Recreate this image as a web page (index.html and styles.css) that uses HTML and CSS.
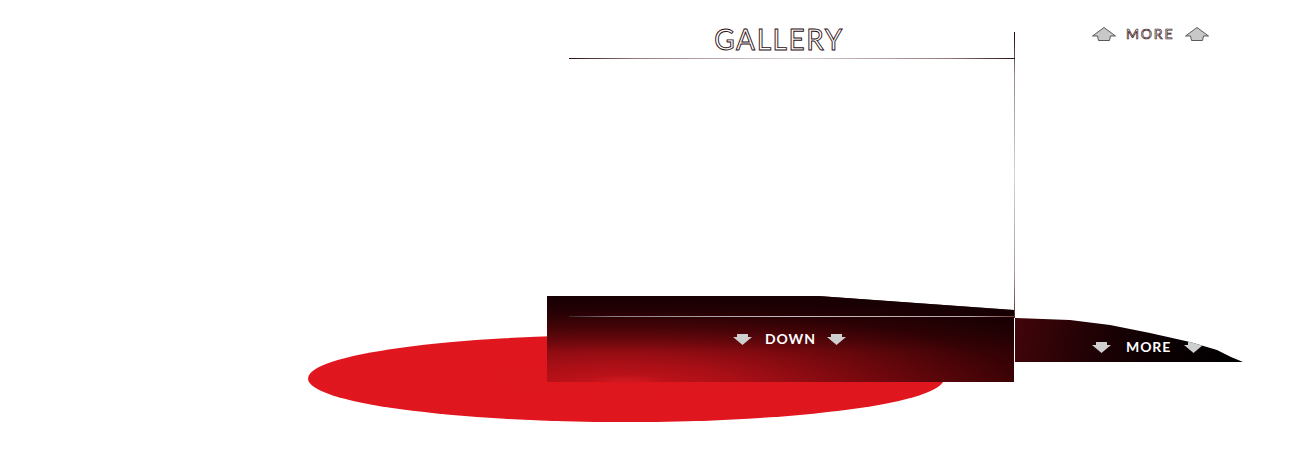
FILE: index.html
```html
<!DOCTYPE html>
<html>
<head>
<meta charset="utf-8">
<link rel="stylesheet" href="styles.css">
</head>
<body>
<div class="stage">
  <div class="glow"></div>
  <section class="panel">
    <header class="head"><h1 class="title">GALLERY</h1></header>
    <div class="body"></div>
    <div class="box">
      <div class="box-line"></div>
      <div class="nav-row down-row">
        <svg class="arrow-down" width="19" height="11" viewBox="0 0 19 11"><path d="M4 0H15V3H19L9.5 11L0 3H4Z"/></svg>
        <span class="nav-label">DOWN</span>
        <svg class="arrow-down" width="19" height="11" viewBox="0 0 19 11"><path d="M4 0H15V3H19L9.5 11L0 3H4Z"/></svg>
      </div>
    </div>
  </section>
  <aside class="side">
    <div class="more-up">
      <svg class="arrow-up" width="24" height="14" viewBox="0 0 24 14"><path d="M0.5 9L12 0.5L23.5 9H18.5L17.5 13.5H6.5L5.5 9Z"/></svg>
      <span class="outline-label">MORE</span>
      <svg class="arrow-up" width="24" height="14" viewBox="0 0 24 14"><path d="M0.5 9L12 0.5L23.5 9H18.5L17.5 13.5H6.5L5.5 9Z"/></svg>
    </div>
    <div class="tail">
      <div class="nav-row more-row">
        <svg class="arrow-down" width="19" height="11" viewBox="0 0 19 11"><path d="M4 0H15V3H19L9.5 11L0 3H4Z"/></svg>
        <span class="nav-label">MORE</span>
        <svg class="arrow-down" width="19" height="11" viewBox="0 0 19 11"><path d="M4 0H15V3H19L9.5 11L0 3H4Z"/></svg>
      </div>
    </div>
  </aside>
</div>
</body>
</html>
```

FILE: styles.css
```css
html, body {
  margin: 0;
  padding: 0;
  background: #fff;
}

.stage {
  position: relative;
  width: 1290px;
  height: 464px;
  box-sizing: border-box;
  padding-left: 547px;
  display: flex;
  align-items: flex-start;
  font-family: "Lato", "Liberation Sans", sans-serif;
  overflow: hidden;
}

.glow {
  position: absolute;
  left: 308px;
  top: 335px;
  width: 636px;
  height: 87px;
  border-radius: 50%;
  background: radial-gradient(ellipse at 50% 50%, #dd161e 0%, #e0161e 60%, #e3171f 100%);
  z-index: 0;
}

.panel {
  position: relative;
  z-index: 1;
  width: 468px;
  padding-top: 28px;
  display: flex;
  flex-direction: column;
  background-image: linear-gradient(to bottom, #1c0204 0%, #9a8a8a 15%, #d8d4d4 50%, #a89898 85%, #5a2a2c 100%);
  background-size: 1px 286px;
  background-position: right 0 top 32px;
  background-repeat: no-repeat;
}

.head {
  height: 31px;
  background-image: linear-gradient(to right, #2a1012 0%, #9a7a7c 15%, #d6d0d0 50%, #9a7a7c 85%, #2a1012 100%);
  background-size: calc(100% - 22px) 1px;
  background-position: right bottom;
  background-repeat: no-repeat;
}

.title {
  margin: 0;
  padding-right: 4px;
  text-align: center;
  font-size: 28px;
  font-weight: 400;
  line-height: 22px;
  letter-spacing: 1.6px;
  color: #fff;
  -webkit-text-stroke: 0.9px #2a0c0e;
}

.body {
  height: 237px;
}

.box {
  width: 467px;
  height: 86px;
  clip-path: polygon(0 0, 271px 0, 100% 14px, 100% 100%, 0 100%);
  background:
    linear-gradient(to bottom, rgba(22, 0, 3, 0.92) 0%, rgba(22, 0, 3, 0.45) 30%, rgba(22, 0, 3, 0) 65%),
    radial-gradient(ellipse 40px 5px at 80px 84px, rgba(235, 40, 45, 0.35), rgba(235, 40, 45, 0) 100%),
    radial-gradient(ellipse 115% 130% at 15% 110%, #d0141c 0%, #a80f16 25%, #70080d 50%, #380205 76%, #170002 100%);
  display: flex;
  flex-direction: column;
}

.box-line {
  margin-left: 22px;
  margin-top: 20px;
  height: 1px;
  background: linear-gradient(to right, #3a2a2a 0%, #8a8080 10%, #c8c0c0 50%, #b8a8a8 90%, #7a3a3c 100%);
}

.nav-row {
  display: flex;
  align-items: center;
}

.down-row {
  margin-top: 16px;
  padding-left: 186px;
}

.arrow-down {
  display: block;
  fill: #cfcfcf;
}

.nav-label {
  color: #fff;
  font-size: 14px;
  font-weight: 700;
  letter-spacing: 0.9px;
  line-height: 12px;
}

.down-row .nav-label {
  margin: 0 11px 0 13px;
}

.side {
  position: relative;
  z-index: 1;
  width: 240px;
  padding-top: 27px;
  display: flex;
  flex-direction: column;
}

.more-up {
  display: flex;
  align-items: center;
  margin-left: 77px;
}

.arrow-up {
  display: block;
  fill: #c8c8c8;
  stroke: #5a5a5a;
  stroke-width: 1;
}

.outline-label {
  margin: 0 11px 0 10px;
  font-size: 14px;
  font-weight: 400;
  letter-spacing: 1.8px;
  line-height: 12px;
  color: #fff;
  -webkit-text-stroke: 0.7px #3a1416;
}

.tail {
  margin-top: 277px;
  width: 228px;
  height: 44px;
  clip-path: polygon(0 0, 55px 2px, 95px 7px, 135px 15px, 175px 24px, 202px 32px, 216px 39px, 228px 44px, 0 44px);
  background: linear-gradient(100deg, #42050a 0%, #240205 30%, #0c0002 60%, #000 100%);
}

.more-row {
  margin-top: 23px;
  margin-left: 77px;
}

.more-row .nav-label {
  margin: 0 13px 0 15px;
}
```
